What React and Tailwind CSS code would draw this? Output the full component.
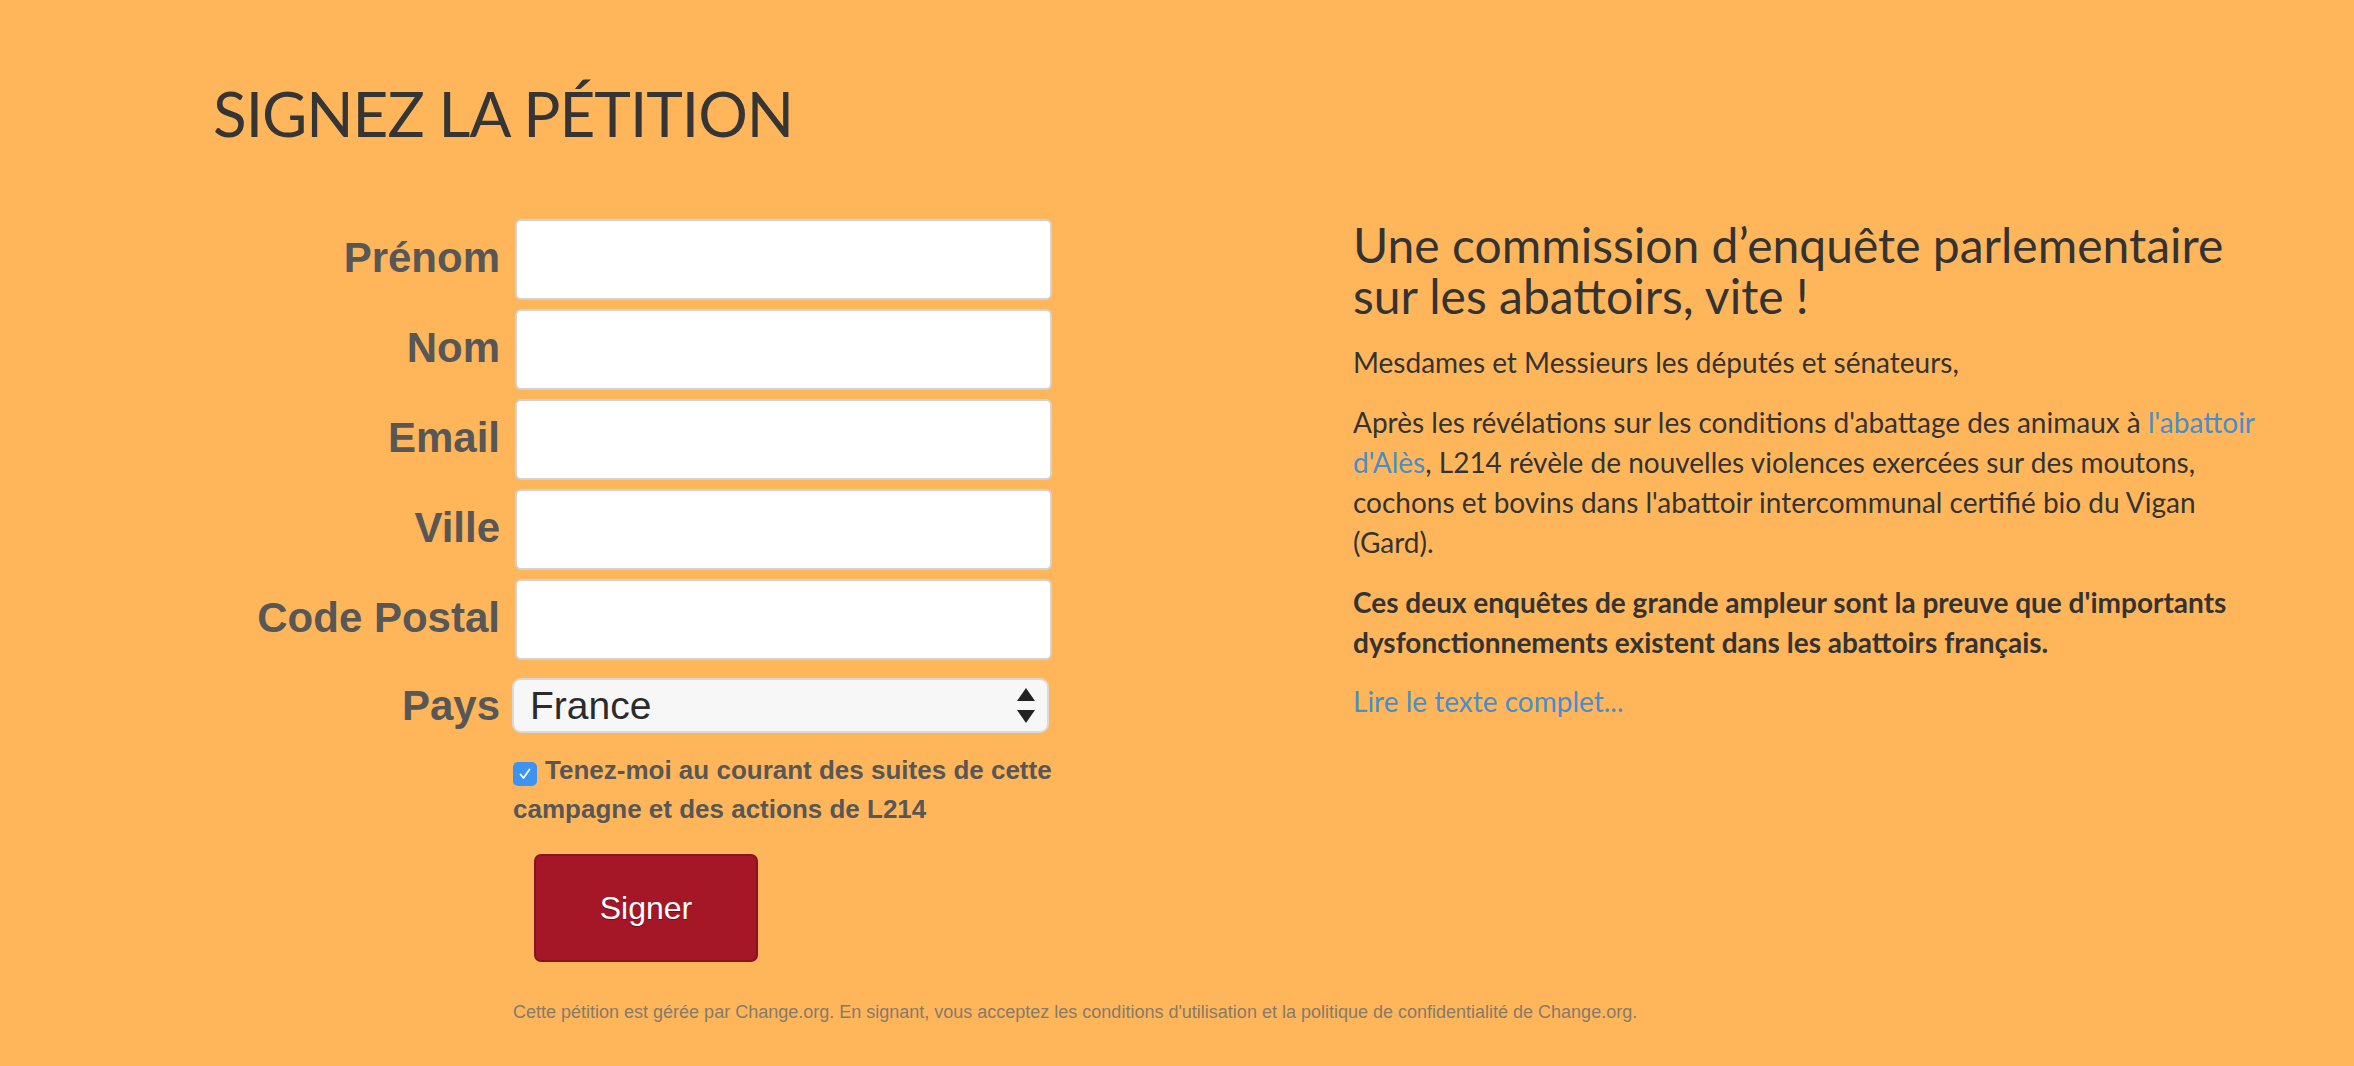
export default function App() {
  const fields = ["Prénom", "Nom", "Email", "Ville", "Code Postal"]

  return <div className="min-h-screen w-full bg-[#ffb65b] pl-[213px] pt-[82px] pb-[40px]">

    <h1 className="font-['Lato',sans-serif] text-[62px] leading-none font-normal text-[#353535] tracking-[-1px]">
      SIGNEZ LA PÉTITION
    </h1>

    <div className="flex mt-[75px]">

      {/* formulaire */}
      <div className="w-[1140px] shrink-0 font-['Liberation_Sans',Arial,sans-serif]">
        <div className="flex flex-col gap-[9px]">
          {fields.map(f =>
            <div key={f} className="flex items-center gap-[15px]">
              <label className="w-[287px] text-right text-[42px] font-bold text-[#575757] leading-none -mt-[3px]">
                {f}
              </label>
              <input type="text" className="w-[537px] h-[81px] bg-white border-2 border-[#d2d2d2] rounded-[6px]" />
            </div>
          )}
        </div>

        <div className="flex items-center gap-[12px] mt-[18px]">
          <label className="w-[287px] text-right text-[42px] font-bold text-[#575757] leading-none">
            Pays
          </label>
          <div className="relative w-[537px]">
            <select className="appearance-none w-full h-[55px] bg-[#f7f7f7] border-2 border-[#d9d9d9] rounded-[9px] pl-[16px] text-[39px] leading-none text-[#2b2b2b] font-['Liberation_Sans',Arial,sans-serif]">
              <option>France</option>
            </select>
            <svg className="absolute right-[14px] top-[10px] pointer-events-none" width="18" height="36" viewBox="0 0 18 36">
              <path d="M9 0 L18 13 L0 13 Z" fill="#222" />
              <path d="M0 22 L18 22 L9 35 Z" fill="#222" />
            </svg>
          </div>
        </div>

        <div className="ml-[300px] w-[545px] mt-[18px] text-[26px] leading-[39px] font-bold text-[#575757]">
          <span className="inline-flex align-[-3px] mr-[8px] w-[24px] h-[24px] rounded-[5px] bg-[#3d94f0] items-center justify-center">
            <svg width="16" height="16" viewBox="0 0 16 16" fill="none">
              <path d="M3.5 8.5 L6.5 12 L12.5 3.5" stroke="white" strokeWidth="1.8" strokeLinecap="round" strokeLinejoin="round" />
            </svg>
          </span>
          Tenez-moi au courant des suites de cette campagne et des actions de L214
        </div>

        <button className="ml-[321px] mt-[25px] w-[224px] h-[108px] bg-[#a51726] border-2 border-[#861420] rounded-[7px] text-white text-[32px] font-['Liberation_Sans',Arial,sans-serif] [text-shadow:0_1px_1px_rgba(0,0,0,0.35)]">
          Signer
        </button>
      </div>

      {/* texte de la pétition */}
      <div className="w-[910px] font-['Lato',sans-serif] text-[#333]">
        <h2 className="text-[48px] leading-[51px] font-normal mb-[21px]">
          Une commission d’enquête parlementaire sur les abattoirs, vite !
        </h2>
        <p className="text-[28px] leading-[40px] mb-[20px]">
          Mesdames et Messieurs les députés et sénateurs,
        </p>
        <p className="text-[28px] leading-[40px] mb-[20px]">
          Après les révélations sur les conditions d'abattage des animaux à <a className="text-[#4a8dc8]" href="#">l'abattoir d'Alès</a>, L214 révèle de nouvelles violences exercées sur des moutons, cochons et bovins dans l'abattoir intercommunal certifié bio du Vigan<br />(Gard).
        </p>
        <p className="text-[28px] leading-[40px] font-bold mb-[19px]">
          Ces deux enquêtes de grande ampleur sont la preuve que d'importants dysfonctionnements existent dans les abattoirs français.
        </p>
        <a className="text-[28px] leading-[40px] text-[#4a8dc8]" href="#">Lire le texte complet...</a>
      </div>
    </div>

    <p className="ml-[300px] mt-[37px] text-[18px] text-[#857b68] font-['Liberation_Sans',Arial,sans-serif]">
      Cette pétition est gérée par Change.org. En signant, vous acceptez les conditions d'utilisation et la politique de confidentialité de Change.org.
    </p>
  </div>
}
